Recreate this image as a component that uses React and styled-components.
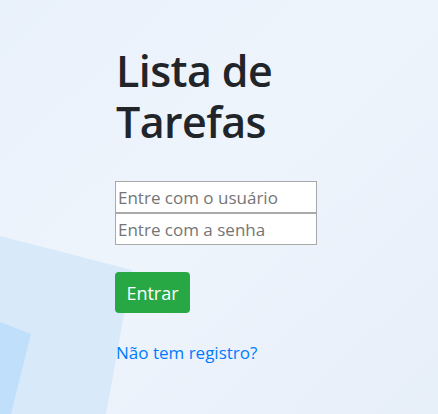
import React from 'react';
import styled, { createGlobalStyle } from 'styled-components';

const GlobalStyle = createGlobalStyle`
  html, body {
    margin: 0;
    padding: 0;
    height: 100%;
  }
  body {
    font-family: 'Open Sans', 'Noto Sans', sans-serif;
    color: #212529;
    background: #e8f0fa;
  }
`;

export default function App() {
  return (
    <>
      <GlobalStyle />
      <Page>
        <Backdrop viewBox="0 0 438 414" preserveAspectRatio="none">
          <defs>
            <linearGradient id="glow" x1="0" y1="0" x2="1" y2="1">
              <stop offset="0%" stopColor="#e9f1fb" />
              <stop offset="45%" stopColor="#eef4fc" />
              <stop offset="100%" stopColor="#e7eff9" />
            </linearGradient>
          </defs>
          <rect width="438" height="414" fill="url(#glow)" />
          <polygon points="0,236 132,270 106,414 0,414" fill="#d8e9f9" />
          <polygon points="0,322 31,334 11,414 0,414" fill="#bfdffa" />
        </Backdrop>
        <LoginBox>
          <Title>Lista de Tarefas</Title>
          <Fields>
            <Field type="text" placeholder="Entre com o usuário" />
            <Field type="password" placeholder="Entre com a senha" />
          </Fields>
          <SubmitButton>Entrar</SubmitButton>
          <RegisterLink href="#">Não tem registro?</RegisterLink>
        </LoginBox>
      </Page>
    </>
  );
}

const Page = styled.div`
  position: relative;
  width: 438px;
  height: 414px;
  overflow: hidden;
`;

const Backdrop = styled.svg`
  position: absolute;
  inset: 0;
  width: 100%;
  height: 100%;
  z-index: 0;
`;

const LoginBox = styled.div`
  position: relative;
  z-index: 1;
  display: flex;
  flex-direction: column;
  align-items: flex-start;
  padding: 45px 0 0 115px;
  width: 210px;
`;

const Title = styled.h1`
  margin: 0 0 34px 1px;
  font-size: 43px;
  font-weight: 600;
  line-height: 51px;
  letter-spacing: -0.6px;
  color: #212529;
`;

const Fields = styled.div`
  display: flex;
  flex-direction: column;
`;

const Field = styled.input`
  box-sizing: border-box;
  width: 202px;
  height: 32px;
  margin: 0;
  padding: 0 2px;
  border: 1px solid #a9a9a9;
  background: #fff;
  font-family: 'Open Sans', 'Noto Sans', sans-serif;
  font-size: 17px;
  color: #495057;
  outline: none;

  &::placeholder {
    color: #757575;
  }
`;

const SubmitButton = styled.button`
  margin-top: 27px;
  width: 75px;
  height: 41px;
  border: none;
  border-radius: 4px;
  background: #28a745;
  color: #fff;
  font-family: 'Open Sans', 'Noto Sans', sans-serif;
  font-size: 18px;
  cursor: pointer;
`;

const RegisterLink = styled.a`
  margin: 28px 0 0 1px;
  color: #007bff;
  font-size: 17px;
  text-decoration: none;
`;
